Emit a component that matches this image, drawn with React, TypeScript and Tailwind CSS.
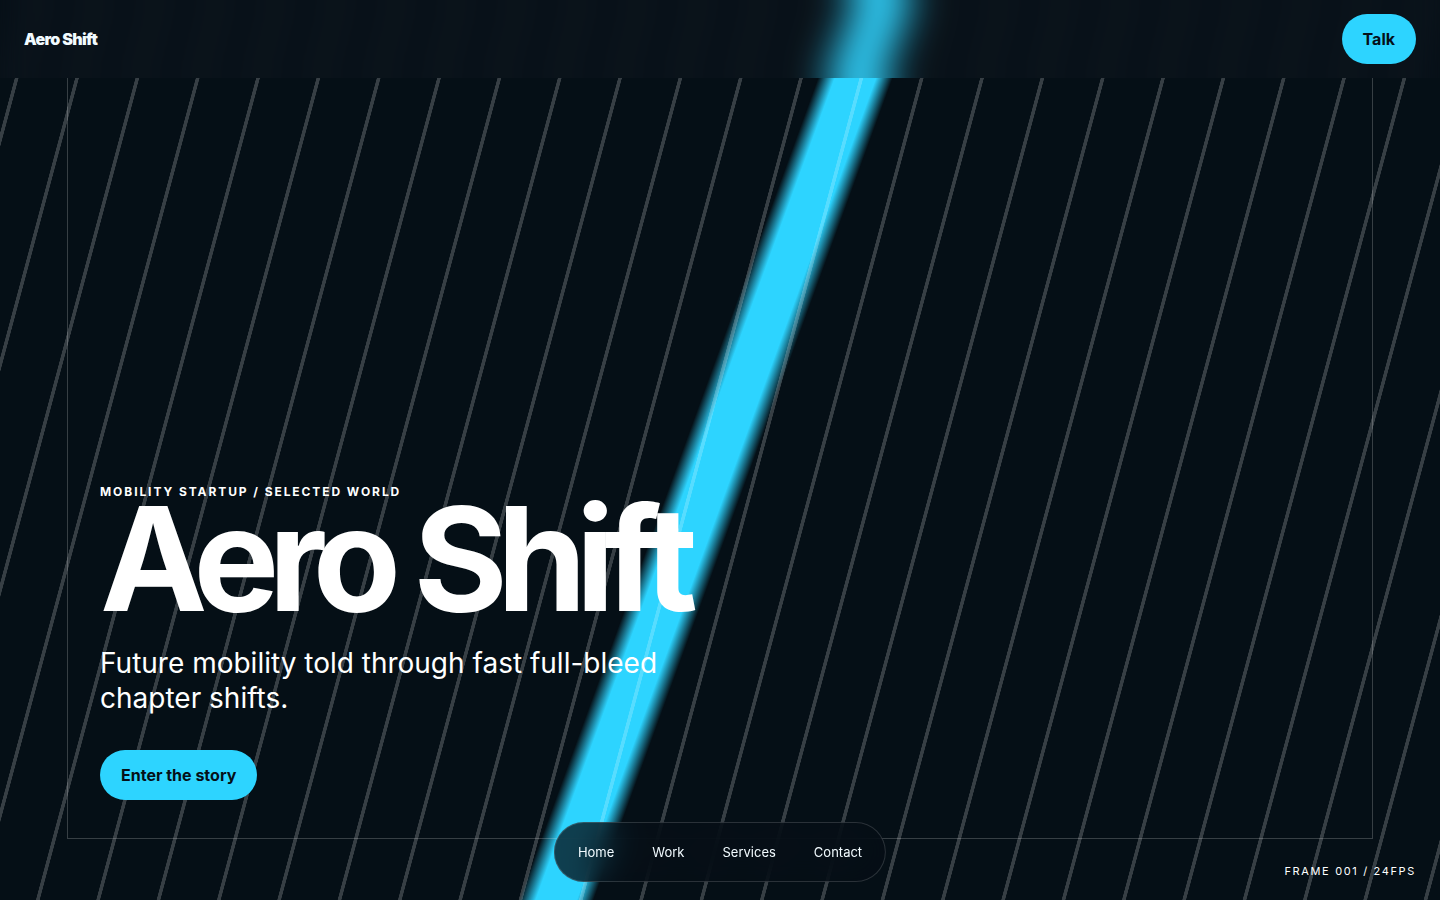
const NAV_LINKS = [
  { label: 'Home', href: '#home' },
  { label: 'Work', href: '#work' },
  { label: 'Services', href: '#services' },
  { label: 'Contact', href: '#contact' },
];

// Diagonal speed lines with the light beam underneath
function Backdrop() {
  return (
    <div
      aria-hidden="true"
      className="absolute -inset-x-10 -inset-y-[25px] bg-[#050f16] bg-[repeating-linear-gradient(105deg,transparent_0%,transparent_1.23%,rgba(255,255,255,0.2)_1.26%,rgba(255,255,255,0.2)_1.44%,transparent_1.47%,transparent_3.4%),linear-gradient(110deg,transparent_48%,#2dd4ff_48.9%,#2dd4ff_51.1%,transparent_52%)]"
    />
  );
}

// Top slice of the backdrop, as tall as the header
function BackdropStrip() {
  return (
    <div className="relative h-full overflow-hidden">
      <div className="relative h-screen">
        <Backdrop />
      </div>
    </div>
  );
}

// Frosted header glass: the slice is mirrored above and below so the blur has no dark edges
function HeaderGlass() {
  return (
    <div aria-hidden="true" className="absolute inset-0 overflow-hidden bg-[#050f16]">
      <div className="relative h-full blur-[18px]">
        <div className="absolute inset-x-0 bottom-full h-full -scale-y-100">
          <BackdropStrip />
        </div>
        <BackdropStrip />
        <div className="absolute inset-x-0 top-full h-full -scale-y-100">
          <BackdropStrip />
        </div>
      </div>
      <div className="absolute inset-0 bg-[#141e26]/8" />
    </div>
  );
}

function Header() {
  return (
    <header className="fixed inset-x-0 top-0 z-20 flex items-center justify-between px-6 py-3.5">
      <HeaderGlass />
      <a href="#home" className="relative text-base font-black tracking-[-0.04em] text-[#f2fbff]">
        Aero Shift
      </a>
      <button
        type="button"
        className="relative h-[50px] rounded-full bg-[#2dd4ff] px-[21px] text-base font-bold text-[#051018]"
      >
        Talk
      </button>
    </header>
  );
}

function Dock() {
  return (
    <nav
      aria-label="Primary"
      className="fixed bottom-[18px] left-1/2 z-20 flex -translate-x-1/2 gap-1.5 rounded-full border border-white/15 bg-[#050d16]/75 p-[7px] backdrop-blur-[18px]"
    >
      {NAV_LINKS.map((link) => (
        <a
          key={link.label}
          href={link.href}
          className="flex h-11 items-center rounded-full px-4 pt-px text-[13px] text-[#f2fbff]"
        >
          {link.label}
        </a>
      ))}
    </nav>
  );
}

export default function App() {
  return (
    <div className="min-h-screen bg-[#050f16] font-[Inter,sans-serif] text-white">
      <Header />
      <main id="home" className="relative flex min-h-screen flex-col justify-end overflow-hidden p-[100px]">
        <Backdrop />
        <div aria-hidden="true" className="absolute inset-x-[67px] -top-1 bottom-[61px] border border-white/20" />
        <div className="relative flex max-w-[640px] flex-col items-start">
          <p className="text-xs leading-[14px] font-bold tracking-[0.16em] uppercase">
            Mobility Startup / Selected World
          </p>
          <h1 className="text-[144px] leading-[120px] font-bold tracking-[-0.075em] whitespace-nowrap">Aero Shift</h1>
          <p className="mt-[27px] text-[28px] leading-[35px]">
            Future mobility told through fast full-bleed chapter shifts.
          </p>
          <a
            href="#work"
            className="mt-[34px] flex h-[50px] items-center rounded-full bg-[#2dd4ff] px-[21px] text-base font-bold text-[#051018]"
          >
            Enter the story
          </a>
        </div>
        <p className="absolute right-6 bottom-5 text-[11px] leading-[18px] tracking-[0.15em] uppercase">
          Frame 001 / 24fps
        </p>
      </main>
      <Dock />
    </div>
  );
}
